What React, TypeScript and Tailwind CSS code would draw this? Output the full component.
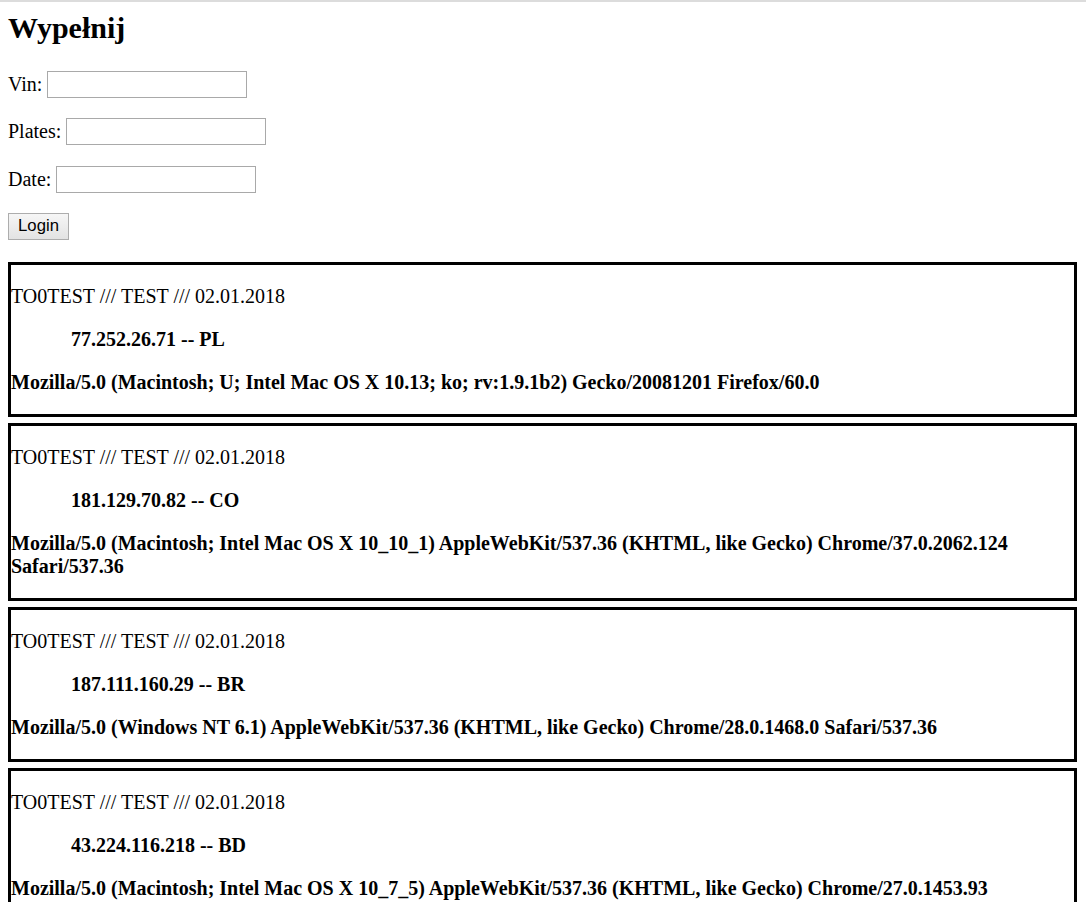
type Entry = {
  ip: string;
  agent: string;
};

const entries: Entry[] = [
  {
    ip: "77.252.26.71 -- PL",
    agent:
      "Mozilla/5.0 (Macintosh; U; Intel Mac OS X 10.13; ko; rv:1.9.1b2) Gecko/20081201 Firefox/60.0",
  },
  {
    ip: "181.129.70.82 -- CO",
    agent:
      "Mozilla/5.0 (Macintosh; Intel Mac OS X 10_10_1) AppleWebKit/537.36 (KHTML, like Gecko) Chrome/37.0.2062.124 Safari/537.36",
  },
  {
    ip: "187.111.160.29 -- BR",
    agent:
      "Mozilla/5.0 (Windows NT 6.1) AppleWebKit/537.36 (KHTML, like Gecko) Chrome/28.0.1468.0 Safari/537.36",
  },
  {
    ip: "43.224.116.218 -- BD",
    agent:
      "Mozilla/5.0 (Macintosh; Intel Mac OS X 10_7_5) AppleWebKit/537.36 (KHTML, like Gecko) Chrome/27.0.1453.93 Safari/537.36",
  },
];

const Field = ({ label, className }: { label: string; className: string }) => (
  <div className={`flex h-[27px] items-center gap-[5px] ${className}`}>
    <span className="leading-[23px]">{label}</span>
    <input
      type="text"
      className="h-[27px] w-[200px] border border-[#a9a9a9] bg-white px-1 outline-none"
    />
  </div>
);

const App = () => {
  return (
    <main className="min-h-screen bg-white text-[20px] text-black font-['Liberation_Serif',_'Times_New_Roman',_serif]">
      <div className="h-[2px] bg-[#dcdcdc]" />
      <div className="pl-[8px] pb-[10px]">
        <h2 className="mt-[9px] text-[30px] font-bold leading-[34px]">Wypełnij</h2>

        <Field label="Vin:" className="mt-[26px]" />
        <Field label="Plates:" className="mt-[20px]" />
        <Field label="Date:" className="mt-[21px]" />

        <button className="mt-[20px] h-[27px] w-[61px] border border-[#adadad] bg-gradient-to-b from-[#f6f6f6] to-[#e3e3e3] text-[16.7px] leading-none font-['Liberation_Sans',_Arial,_sans-serif]">
          Login
        </button>

        <div className="mt-[22px] flex flex-col gap-[6px]">
          {entries.map((e) => (
            <div key={e.ip} className="w-[1069px] border-[3px] border-black py-[20px] leading-[23px]">
              <p>TO0TEST /// TEST /// 02.01.2018</p>
              <p className="mt-[20px] pl-[60px] font-bold">{e.ip}</p>
              <p className="mt-[20px] font-bold">{e.agent}</p>
            </div>
          ))}
        </div>
      </div>
    </main>
  );
};

export default App;
